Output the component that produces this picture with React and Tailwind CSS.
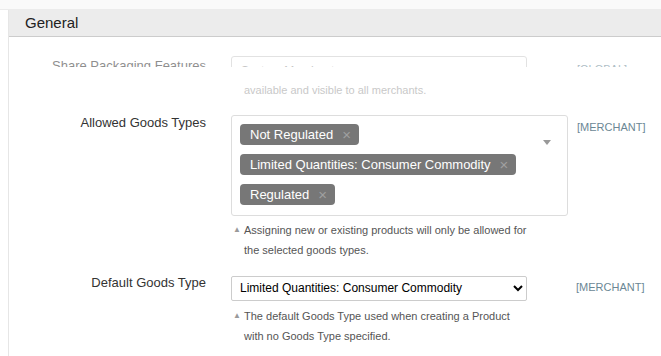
import React from 'react';

const HelpText = ({ lines, faded }) => (
  <div className={`flex text-[11px] leading-[20px] ${faded ? 'text-[#9c9c9c]' : 'text-[#555]'}`}>
    <span className="w-[13px] shrink-0 pl-[2px] text-[8px] text-[#9a9a9a]">{faded ? '' : '▲'}</span>
    <div>
      {lines.map((l) => (
        <div key={l}>{l}</div>
      ))}
    </div>
  </div>
);

const Pill = ({ label }) => (
  <span className="flex h-[21px] items-center rounded-[4px] bg-[#777] pl-[10px] pr-[8px] text-[13px] text-white">
    {label}
    <span className="ml-[9px] text-[15px] leading-none text-[#a0a0a0]">×</span>
  </span>
);

const App = () => {
  const goodsTypes = ['Not Regulated', 'Limited Quantities: Consumer Commodity', 'Regulated'];

  return (
    <div className="min-h-screen bg-white font-['Liberation_Sans',Arial,sans-serif] text-[#333]">
      {/* top strip */}
      <div className="h-[10px] border-b border-[#ececec] bg-[#fafafa]" />

      <div className="ml-[8px] min-h-[346px] border-l border-[#e6e6e6]">
        {/* Panel header */}
        <div className="flex h-[27px] items-center border-b border-[#cccccc] bg-[#ececec] pl-[16px] text-[15px] text-[#222]">
          General
        </div>

        {/* Faded, partially hidden row */}
        <div className="opacity-55">
          <div className="mt-[19px] flex h-[11px] overflow-hidden">
            <div className="w-[197px] pt-[2px] text-right text-[13px] leading-[16px]">Share Packaging Features</div>
            <div className="ml-[25px] w-[337px]">
              <div className="h-[25px] w-[296px] rounded-[3px] border border-[#ccc] pl-[9px] pt-[5px] text-[12px] text-[#999]">
                System Merchant
              </div>
            </div>
            <div className="ml-[9px] pt-[6px] text-[11px] leading-[14px] text-[#6b8795]">[GLOBAL]</div>
          </div>
          <div className="ml-[222px] mt-[13px]">
            <HelpText faded lines={['available and visible to all merchants.']} />
          </div>
        </div>

        {/* Allowed Goods Types */}
        <div className="mt-[15px] flex">
          <div className="w-[197px] text-right text-[13px] leading-[16px]">Allowed Goods Types</div>
          <div className="ml-[25px] w-[337px]">
            <div className="flex justify-between rounded-[3px] border border-[#ddd] bg-white pb-[10px] pl-[8px] pt-[8px]">
              <div className="flex flex-col items-start gap-[9px]">
                {goodsTypes.map((g) => (
                  <Pill key={g} label={g} />
                ))}
              </div>
              <div className="pr-[16px] pt-[16px]">
                <div className="h-0 w-0 border-x-[4px] border-t-[5px] border-x-transparent border-t-[#999]" />
              </div>
            </div>
            <div className="mt-[4px]">
              <HelpText
                lines={[
                  'Assigning new or existing products will only be allowed for',
                  'the selected goods types.',
                ]}
              />
            </div>
          </div>
          <div className="ml-[9px] pt-[5px] text-[11px] leading-[14px] text-[#6b8795]">[MERCHANT]</div>
        </div>

        {/* Default Goods Type */}
        <div className="mt-[15px] flex">
          <div className="w-[197px] text-right text-[13px] leading-[16px]">Default Goods Type</div>
          <div className="ml-[25px] w-[337px]">
            <select
              defaultValue="lq"
              className="h-[25px] w-[296px] rounded-[2px] border border-[#ccc] bg-white pl-[4px] text-[12px] text-black"
            >
              <option value="nr">Not Regulated</option>
              <option value="lq">Limited Quantities: Consumer Commodity</option>
              <option value="r">Regulated</option>
            </select>
            <div className="mt-[5px]">
              <HelpText
                lines={[
                  'The default Goods Type used when creating a Product',
                  'with no Goods Type specified.',
                ]}
              />
            </div>
          </div>
          <div className="ml-[8px] pt-[5px] text-[11px] leading-[14px] text-[#6b8795]">[MERCHANT]</div>
        </div>
      </div>
    </div>
  );
};

export default App;
